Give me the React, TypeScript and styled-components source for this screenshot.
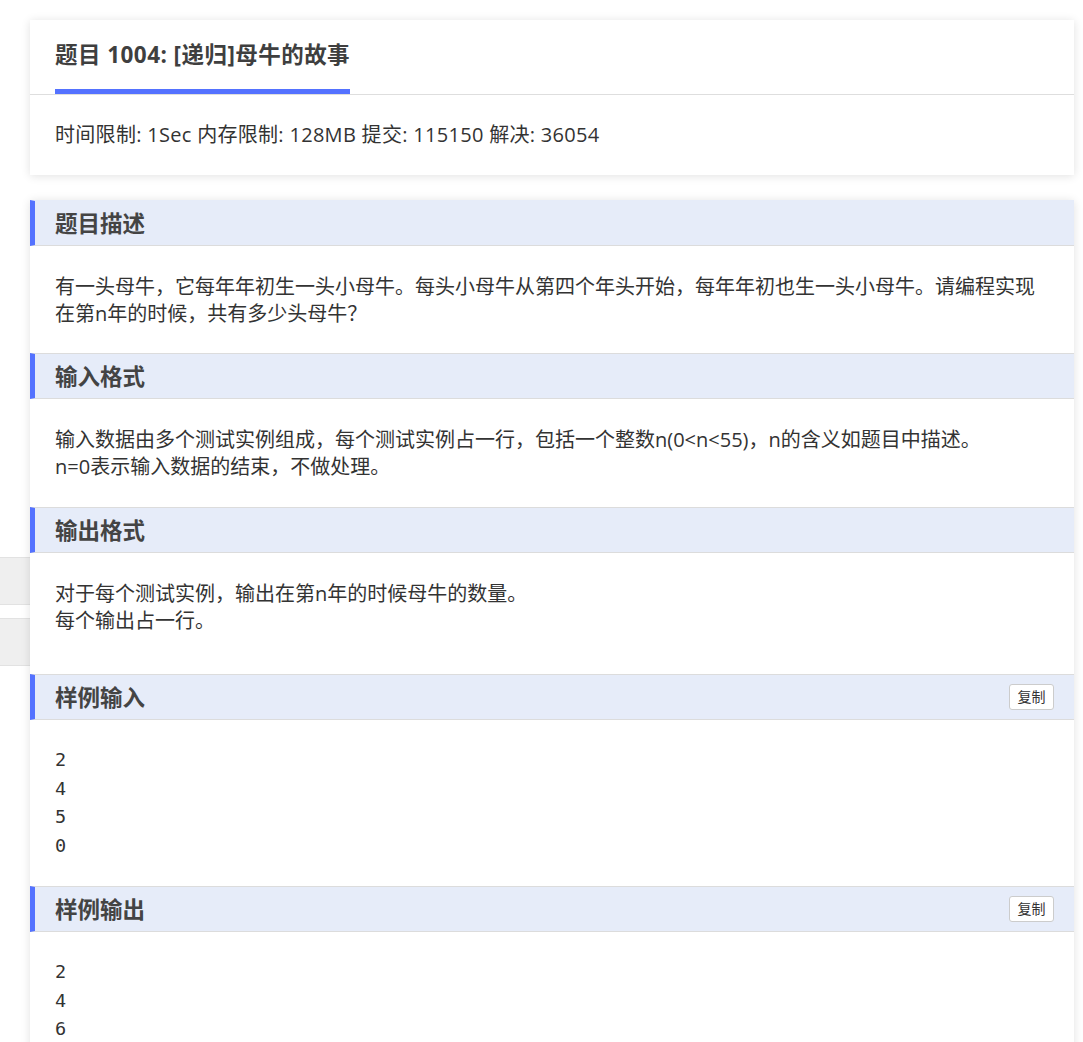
import React from "react";
import styled, { createGlobalStyle } from "styled-components";

const GlobalStyle = createGlobalStyle`
  html, body {
    margin: 0;
    padding: 0;
    background: #ffffff;
  }
  body {
    font-family: "Open Sans", "Noto Sans CJK SC", sans-serif;
    color: #333333;
    overflow: hidden;
  }
`;

const Page = styled.div`
  display: flex;
  align-items: flex-start;
  width: 1083px;
  height: 1042px;
  overflow: hidden;
`;

const LeftRail = styled.div`
  width: 30px;
  flex: 0 0 30px;
  padding-top: 557px;
  display: flex;
  flex-direction: column;
  gap: 13px;
`;

const RailBlock = styled.div`
  height: 46px;
  background: #efefef;
  border-top: 1px solid #e2e2e2;
  border-bottom: 1px solid #e2e2e2;
`;

const Main = styled.div`
  width: 1044px;
  flex: 0 0 1044px;
  padding-top: 20px;
  display: flex;
  flex-direction: column;
  gap: 25px;
  position: relative;
  z-index: 1;
`;

const Card = styled.div`
  background: #ffffff;
  box-shadow: 0 1px 9px rgba(0, 0, 0, 0.12);
`;

const TitleBar = styled.div`
  padding: 0 25px;
  border-bottom: 1px solid #dedede;
  display: flex;
`;

const Title = styled.h1`
  margin: 0;
  height: 69px;
  line-height: 70px;
  font-size: 22.5px;
  font-weight: 700;
  letter-spacing: 0.45px;
  color: #3f3f3f;
  border-bottom: 5px solid #5472ff;
  white-space: nowrap;
`;

const Info = styled.div`
  padding: 27px 25px 27px;
  font-size: 20px;
  line-height: 26px;
  letter-spacing: 0.3px;
  color: #333333;
`;

const SectionHeader = styled.div<{ $first?: boolean }>`
  height: 44px;
  display: flex;
  align-items: center;
  justify-content: space-between;
  background: #e6ecf9;
  border-left: 5px solid #5472ff;
  border-top: ${(p) => (p.$first ? "1px solid #e6ecf9" : "1px solid #dcdcdc")};
  border-bottom: 1px solid #dcdcdc;
  padding: 0 20px 0 20px;
`;

const SectionTitle = styled.h2`
  margin: 0;
  padding-top: 2px;
  font-size: 22.5px;
  font-weight: 700;
  color: #444444;
  line-height: 30px;
`;

const CopyButton = styled.button`
  font-family: "Open Sans", "Noto Sans CJK SC", sans-serif;
  font-size: 14px;
  line-height: 18px;
  height: 26px;
  width: 45px;
  padding: 0;
  background: #ffffff;
  color: #333333;
  border: 1px solid #cccccc;
  border-radius: 3px;
  cursor: pointer;
`;

const SectionBody = styled.div<{ $bottom: number }>`
  padding: 27px 25px ${(p) => p.$bottom}px;
  font-size: 20px;
  line-height: 27px;
  color: #333333;
`;

const Para = styled.p`
  margin: 0;
`;

const Code = styled.pre<{ $top: number; $bottom: number }>`
  margin: 0;
  padding: ${(p) => p.$top}px 25px ${(p) => p.$bottom}px;
  font-family: "DejaVu Sans Mono", "Liberation Mono", monospace;
  font-size: 18.5px;
  line-height: 28.7px;
  color: #333333;
`;

type Section = {
  title: string;
  lines?: string[];
  code?: string[];
  copy?: boolean;
  bottom: number;
};

const sections: Section[] = [
  {
    title: "题目描述",
    lines: [
      "有一头母牛，它每年年初生一头小母牛。每头小母牛从第四个年头开始，每年年初也生一头小母牛。请编程实现在第n年的时候，共有多少头母牛？",
    ],
    bottom: 26,
  },
  {
    title: "输入格式",
    lines: [
      "输入数据由多个测试实例组成，每个测试实例占一行，包括一个整数n(0<n<55)，n的含义如题目中描述。",
      "n=0表示输入数据的结束，不做处理。",
    ],
    bottom: 27,
  },
  {
    title: "输出格式",
    lines: ["对于每个测试实例，输出在第n年的时候母牛的数量。", "每个输出占一行。"],
    bottom: 40,
  },
  {
    title: "样例输入",
    code: ["2", "4", "5", "0"],
    copy: true,
    bottom: 25,
  },
  {
    title: "样例输出",
    code: ["2", "4", "6"],
    copy: true,
    bottom: 27,
  },
];

export default function App() {
  return (
    <>
      <GlobalStyle />
      <Page>
        <LeftRail>
          <RailBlock />
          <RailBlock />
        </LeftRail>
        <Main>
          <Card>
            <TitleBar>
              <Title>题目 1004: [递归]母牛的故事</Title>
            </TitleBar>
            <Info>时间限制: 1Sec 内存限制: 128MB 提交: 115150 解决: 36054</Info>
          </Card>
          <Card>
            {sections.map((s, i) => (
              <React.Fragment key={s.title}>
                <SectionHeader $first={i === 0}>
                  <SectionTitle>{s.title}</SectionTitle>
                  {s.copy && <CopyButton>复制</CopyButton>}
                </SectionHeader>
                {s.lines && (
                  <SectionBody $bottom={s.bottom}>
                    {s.lines.map((l) => (
                      <Para key={l}>{l}</Para>
                    ))}
                  </SectionBody>
                )}
                {s.code && (
                  <Code $top={26} $bottom={s.bottom}>
                    {s.code.join("\n")}
                  </Code>
                )}
              </React.Fragment>
            ))}
          </Card>
        </Main>
      </Page>
    </>
  );
}
